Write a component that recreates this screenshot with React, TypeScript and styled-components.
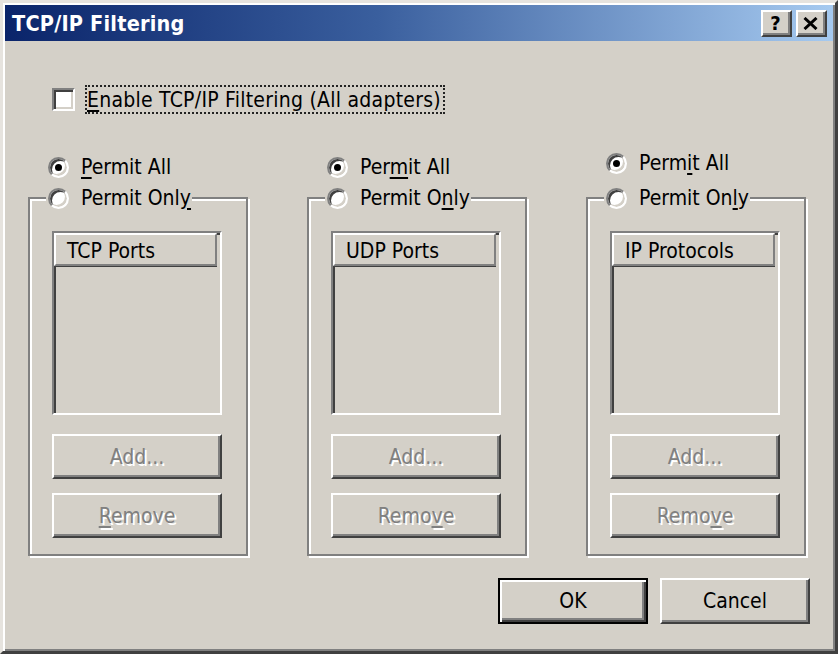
import React from "react";
import styled, { createGlobalStyle } from "styled-components";

const FONT = `"DejaVu Sans Condensed", "DejaVu Sans", "Liberation Sans", sans-serif`;
const FACE = "#d4d0c8";
const TEXT = "21px";

const Global = createGlobalStyle`
  html, body { margin: 0; padding: 0; background: ${FACE}; }
  body { font-family: ${FONT}; font-stretch: condensed; }
  *, *::before, *::after { box-sizing: border-box; }
`;

const Window = styled.div`
  width: 838px;
  height: 654px;
  background: ${FACE};
  border: 3px solid;
  border-color: #e6e3de #404040 #404040 #e6e3de;
  box-shadow: inset 2px 2px 0 #fff, inset -2px -2px 0 #808080;
  padding: 2px;
  display: flex;
  flex-direction: column;
  overflow: hidden;
`;

const TitleBar = styled.div`
  flex: none;
  height: 36px;
  display: flex;
  align-items: center;
  padding: 0 6px 0 7px;
  background: linear-gradient(to right, #0a246a 0%, #3a5f9e 45%, #a6caf0 100%);
`;

const TitleText = styled.div`
  flex: 1;
  color: #fff;
  font-weight: bold;
  font-size: 21.5px;
  letter-spacing: 0.2px;
  white-space: nowrap;
  padding-top: 1px;
`;

const CapButton = styled.div<{ $gap?: number }>`
  width: 31px;
  height: 27px;
  margin-left: ${(p) => p.$gap ?? 0}px;
  background: ${FACE};
  border: 2px solid;
  border-color: #fff #404040 #404040 #fff;
  box-shadow: inset -2px -2px 0 #808080;
  display: grid;
  place-items: center;
  font-weight: bold;
  font-size: 20px;
  line-height: 1;
  color: #000;
  padding-right: 2px;
`;

const Body = styled.div`
  flex: 1;
  display: flex;
  flex-direction: column;
  padding: 44px 23px 0 23px;
`;

const CheckRow = styled.div`
  display: flex;
  align-items: center;
  margin-left: 24px;
  height: 29px;
`;

const CheckBox = styled.span`
  flex: none;
  width: 23px;
  height: 23px;
  background: #fff;
  border: 2px solid;
  border-color: #808080 #fff #fff #808080;
  box-shadow: inset 2px 2px 0 #404040, inset -2px -2px 0 ${FACE};
`;

const FocusLabel = styled.span`
  margin-left: 10px;
  height: 29px;
  display: flex;
  align-items: center;
  padding: 0 2px 0 0;
  border: 2px dotted #222;
  font-size: ${TEXT};
  letter-spacing: 0.25px;
  color: #000;
  white-space: nowrap;
`;

const Key = styled.span`
  text-decoration: underline;
  text-decoration-thickness: 2px;
  text-underline-offset: 3px;
`;

const Columns = styled.div`
  display: flex;
  gap: 59px;
  margin-top: 41px;
`;

const Column = styled.div`
  width: 220px;
  display: flex;
  flex-direction: column;
`;

const RadioRow = styled.label<{ $nudge?: number }>`
  display: flex;
  align-items: center;
  gap: 12px;
  height: 24px;
  margin-left: 20px;
  margin-top: ${(p) => -(p.$nudge ?? 0)}px;
  margin-bottom: ${(p) => p.$nudge ?? 0}px;
  font-size: ${TEXT};
  color: #000;
  white-space: nowrap;
`;

const Radio = styled.span<{ $on?: boolean }>`
  flex: none;
  width: 21px;
  height: 21px;
  border-radius: 50%;
  background: #fff;
  border: 2px solid;
  border-color: #808080 #fff #fff #808080;
  box-shadow: inset 2px 2px 0 #404040, inset -2px -2px 0 ${FACE};
  display: grid;
  place-items: center;
  &::after {
    content: "";
    width: 7px;
    height: 7px;
    border-radius: 50%;
    background: ${(p) => (p.$on ? "#000" : "transparent")};
  }
`;

const Group = styled.fieldset`
  margin: 7px 0 0 0;
  min-width: 0;
  width: 220px;
  padding: 21px 24px 16px 22px;
  border: 2px solid #808080;
  box-shadow: inset 2px 2px 0 #fff, 2px 2px 0 #fff;
  display: flex;
  flex-direction: column;
`;

const Legend = styled.legend`
  margin-left: -6px;
  padding: 0 1px 0 2px;
  height: 24px;
  display: flex;
  align-items: center;
  gap: 12px;
  background: ${FACE};
  font-size: ${TEXT};
  color: #000;
  white-space: nowrap;
`;

const ListBox = styled.div`
  width: 100%;
  height: 184px;
  background: ${FACE};
  border: 2px solid;
  border-color: #808080 #fff #fff #808080;
  box-shadow: inset 2px 2px 0 #404040, inset -2px -2px 0 ${FACE};
  padding: 0;
`;

const ListHeader = styled.div`
  height: 33px;
  margin-right: 3px;
  display: flex;
  align-items: center;
  padding-left: 11px;
  padding-top: 2px;
  background: ${FACE};
  border: 2px solid;
  border-color: #fff #808080 #808080 #fff;
  box-shadow: 0 1px 0 #404040;
  font-size: ${TEXT};
  color: #000;
  white-space: nowrap;
`;

const Button = styled.button<{ $top?: number; $default?: boolean }>`
  display: flex;
  align-items: center;
  justify-content: center;
  margin: ${(p) => p.$top ?? 0}px 0 0 0;
  padding: 0;
  font-family: ${FONT};
  font-stretch: condensed;
  font-size: ${TEXT};
  color: #000;
  background: ${FACE};
  border: 2px solid;
  border-color: ${(p) => (p.$default ? "#000" : "#fff #404040 #404040 #fff")};
  box-shadow: ${(p) =>
    p.$default
      ? "inset 2px 2px 0 #fff, inset -2px -2px 0 #404040, inset -4px -4px 0 #808080"
      : "inset -2px -2px 0 #808080"};
  &:disabled {
    color: #808080;
    text-shadow: 2px 2px 0 #fff;
  }
`;

const SideButton = styled(Button)`
  width: 100%;
  height: 45px;
`;

const DialogButton = styled(Button)`
  width: 150px;
  height: 46px;
`;

const Footer = styled.div`
  display: flex;
  justify-content: flex-end;
  gap: 12px;
  margin-top: 22px;
`;

function Label({ text, k }: { text: string; k?: number }) {
  if (k === undefined) return <span>{text}</span>;
  return (
    <span>
      {text.slice(0, k)}
      <Key>{text[k]}</Key>
      {text.slice(k + 1)}
    </span>
  );
}

type Col = {
  header: string;
  allKey: number;
  onlyKey: number;
  removeKey?: number;
  nudge?: number;
};

const columns: Col[] = [
  { header: "TCP Ports", allKey: 0, onlyKey: 10, removeKey: 0 },
  { header: "UDP Ports", allKey: 3, onlyKey: 8, removeKey: 4 },
  { header: "IP Protocols", allKey: 4, onlyKey: 9, removeKey: 4, nudge: 4 },
];

export default function App() {
  return (
    <>
      <Global />
      <Window>
        <TitleBar>
          <TitleText>TCP/IP Filtering</TitleText>
          <CapButton>?</CapButton>
          <CapButton $gap={4}>
            <svg width="15" height="13" viewBox="0 0 15 13">
              <path d="M1.5 1 L13.5 12 M13.5 1 L1.5 12" stroke="#000" strokeWidth="3" />
            </svg>
          </CapButton>
        </TitleBar>
        <Body>
          <CheckRow>
            <CheckBox />
            <FocusLabel>
              <Label text="Enable TCP/IP Filtering (All adapters)" k={0} />
            </FocusLabel>
          </CheckRow>
          <Columns>
            {columns.map((c) => (
              <Column key={c.header}>
                <RadioRow $nudge={c.nudge}>
                  <Radio $on />
                  <Label text="Permit All" k={c.allKey} />
                </RadioRow>
                <Group>
                  <Legend>
                    <Radio />
                    <Label text="Permit Only" k={c.onlyKey} />
                  </Legend>
                  <ListBox>
                    <ListHeader>{c.header}</ListHeader>
                  </ListBox>
                  <SideButton $top={19} disabled>
                    Add...
                  </SideButton>
                  <SideButton $top={14} disabled>
                    <Label text="Remove" k={c.removeKey} />
                  </SideButton>
                </Group>
              </Column>
            ))}
          </Columns>
          <Footer>
            <DialogButton $default>OK</DialogButton>
            <DialogButton>Cancel</DialogButton>
          </Footer>
        </Body>
      </Window>
    </>
  );
}
